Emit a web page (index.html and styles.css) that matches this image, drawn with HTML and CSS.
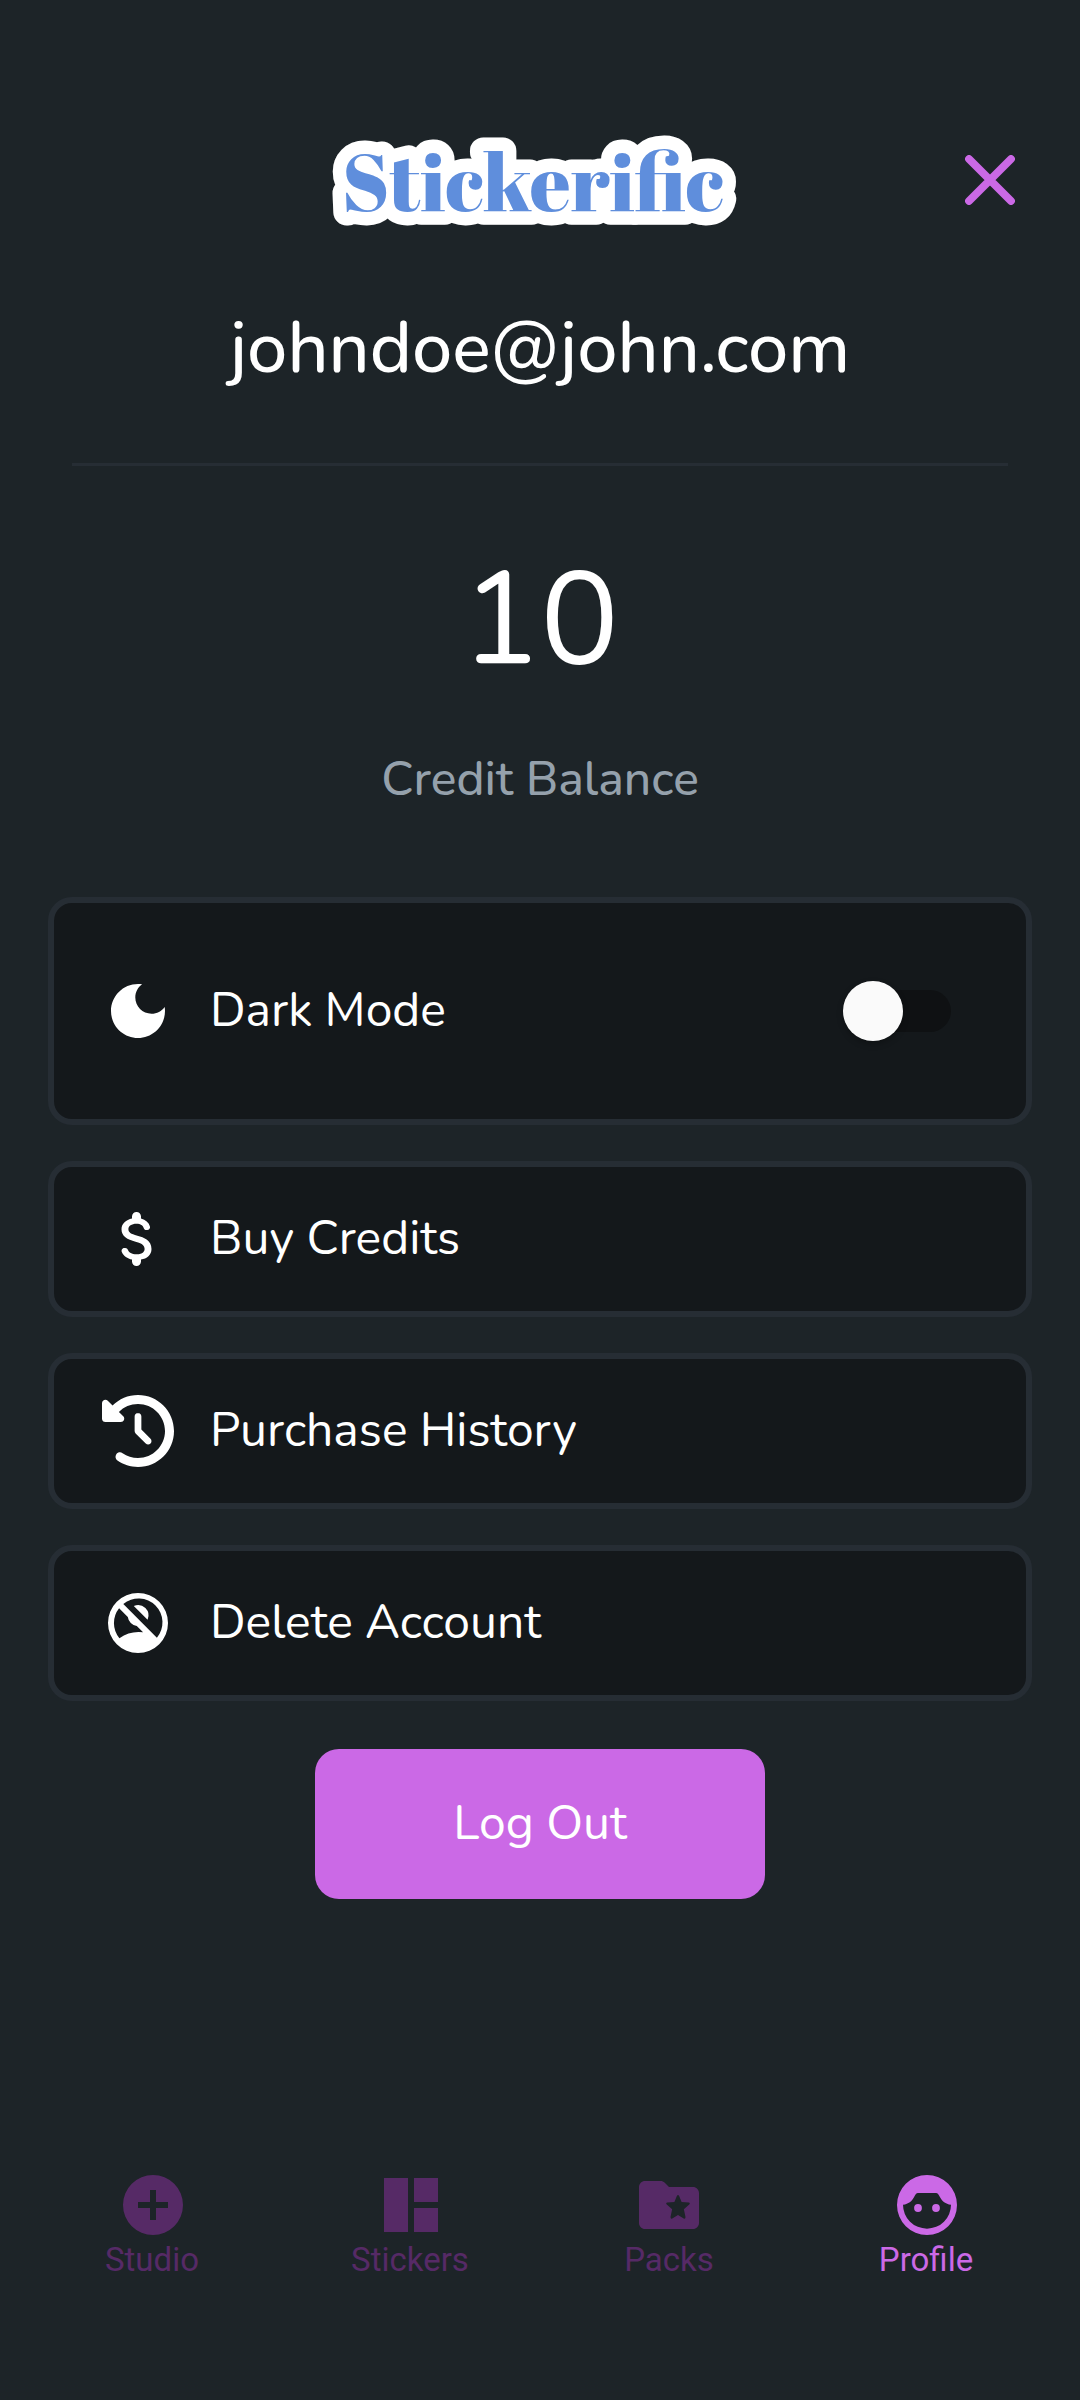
FILE: index.html
```html
<!DOCTYPE html>
<html lang="en">
<head>
<meta charset="utf-8">
<title>Stickerific – Profile</title>
<link rel="stylesheet" href="styles.css">
</head>
<body>
<div class="screen">
  <header class="header">
    <svg class="logo" viewBox="0 0 420 100" role="img" aria-label="Stickerific">
      <text class="logo-outline" x="201" y="79.5">Stickerific</text>
      <text class="logo-fill" x="201" y="79.5">Stickerific</text>
    </svg>
    <button class="close" aria-label="Close">
      <svg viewBox="0 0 50 50"><path d="M4 4 46 46M46 4 4 46"/></svg>
    </button>
  </header>
  <div class="email">johndoe@john.com</div>
  <hr class="divider">
  <div class="balance">10</div>
  <div class="balance-label">Credit Balance</div>

  <main class="menu">
    <div class="card card-tall">
      <svg class="icon" viewBox="0 0 24 24"><path d="M12 3c-4.97 0-9 4.03-9 9s4.03 9 9 9 9-4.03 9-9c0-.46-.04-.92-.1-1.36-.98 1.37-2.58 2.26-4.4 2.26-2.98 0-5.4-2.42-5.4-5.4 0-1.81.89-3.42 2.26-4.4C12.92 3.04 12.46 3 12 3z"/></svg>
      <span class="label">Dark Mode</span>
      <span class="switch"><span class="thumb"></span></span>
    </div>
    <div class="card">
      <svg class="icon" viewBox="0 0 24 24"><path d="M11.8 10.9c-2.27-.59-3-1.2-3-2.15 0-1.09 1.01-1.85 2.7-1.85 1.42 0 2.13.54 2.39 1.4.12.4.45.7.87.7h.3c.66 0 1.13-.65.9-1.27-.42-1.18-1.4-2.16-2.96-2.54V4.5c0-.83-.67-1.5-1.5-1.5S10 3.67 10 4.5v.66c-1.94.42-3.5 1.68-3.5 3.61 0 2.31 1.91 3.46 4.7 4.13 2.5.6 3 1.48 3 2.41 0 .69-.49 1.79-2.7 1.79-1.65 0-2.5-.59-2.83-1.43-.15-.39-.49-.67-.9-.67h-.28c-.67 0-1.14.68-.89 1.3.57 1.39 1.9 2.21 3.4 2.53v.67c0 .83.67 1.5 1.5 1.5s1.5-.67 1.5-1.5v-.65c1.95-.37 3.5-1.5 3.5-3.55 0-2.84-2.43-3.81-4.7-4.4z"/></svg>
      <span class="label">Buy Credits</span>
    </div>
    <div class="card">
      <svg class="icon" viewBox="0 0 512 512"><path d="M75 75L41 41C25.9 25.9 0 36.6 0 57.9V168c0 13.3 10.7 24 24 24H134.1c21.4 0 32.1-25.9 17-41l-30.8-30.8C155 85.5 203 64 256 64c106 0 192 86 192 192s-86 192-192 192c-40.8 0-78.6-12.7-109.7-34.4c-14.5-10.1-34.4-6.6-44.6 7.9s-6.6 34.4 7.9 44.6C151.2 495 201.7 512 256 512c141.4 0 256-114.6 256-256S397.4 0 256 0C185.3 0 121.3 28.7 75 75zm181 53c-13.3 0-24 10.7-24 24V256c0 6.4 2.5 12.5 7 17l72 72c9.4 9.4 24.6 9.4 33.9 0s9.4-24.6 0-33.9l-65-65V152c0-13.3-10.7-24-24-24z"/></svg>
      <span class="label">Purchase History</span>
    </div>
    <div class="card">
      <svg class="icon" viewBox="0 0 24 24"><path fill-rule="evenodd" d="M12 2a10 10 0 1 0 0 20 10 10 0 0 0 0-20zM7.1 5.7A7.95 7.95 0 0 1 18.3 16.9L7.1 5.7zM5.7 7.1 8.6 10a3.5 3.5 0 0 0 3 3L13.7 15.1A11 11 0 0 0 5.8 17.1 7.95 7.95 0 0 1 5.7 7.1z"/><path d="M10.6 6.3A3.5 3.5 0 0 1 15.2 10.9z"/></svg>
      <span class="label">Delete Account</span>
    </div>
  </main>
  <button class="logout">Log Out</button>

  <nav class="nav">
    <a class="tab">
      <svg class="icon" viewBox="0 0 24 24"><path d="M12 2a10 10 0 1 0 0 20 10 10 0 0 0 0-20zm5 11h-4v4h-2v-4H7v-2h4V7h2v4h4v2z"/></svg>
      <span>Studio</span>
    </a>
    <a class="tab">
      <svg class="icon" viewBox="0 0 24 24"><path d="M3 3h8v18H3zM13 3h8v8h-8zM13 13h8v8h-8z"/></svg>
      <span>Stickers</span>
    </a>
    <a class="tab">
      <svg class="icon" viewBox="0 0 24 24"><path fill-rule="evenodd" d="M20 6h-8l-1.41-1.41C10.21 4.21 9.7 4 9.17 4H4c-1.1 0-2 .9-2 2v12c0 1.1.9 2 2 2h16c1.1 0 2-.9 2-2V8c0-1.1-.9-2-2-2zM15.35 8.9 16.2 11 18.55 11.2Q19.2 11.35 18.75 11.85L16.95 13.4 17.5 16Q17.5 16.75 16.9 16.5L15 15.3 13.1 16.5Q12.5 16.75 12.5 16L13.05 13.4 11.25 11.85Q10.8 11.35 11.45 11.2L13.8 11 14.65 8.9Q15 8.35 15.35 8.9z"/></svg>
      <span class="flush">Packs</span>
    </a>
    <a class="tab active">
      <svg class="icon" viewBox="0 0 24 24"><path fill-rule="evenodd" d="M12 2a10 10 0 1 0 0 20 10 10 0 0 0 0-20zM4 11.9C5.9 11.6 6.9 10.8 7.7 9.3 8.2 8.4 8.4 8 9 8h6c.6 0 .8.4 1.3 1.3.8 1.5 1.8 2.3 3.7 2.6A8 8 0 1 1 4 11.9z"/><circle cx="9" cy="13" r="1.3"/><circle cx="15" cy="13" r="1.3"/></svg>
      <span>Profile</span>
    </a>
  </nav>
</div>
</body>
</html>
```
FILE: styles.css
```css
* { box-sizing: border-box; }
body {
  margin: 0;
  background: #1d2428;
  color: #fff;
  font-family: Nunito, Lato, sans-serif;
}
button { border: 0; padding: 0; background: none; font: inherit; color: inherit; }
.screen {
  width: 1080px;
  height: 2400px;
  display: flex;
  flex-direction: column;
  align-items: center;
}
.header {
  width: 100%;
  height: 100px;
  margin-top: 131px;
  padding: 0 65px 0 332px;
  display: flex;
  justify-content: space-between;
  align-items: flex-start;
}
.logo { width: 420px; height: 100px; overflow: visible; }
.logo text {
  font-family: "Abril Fatface", "Liberation Serif", serif;
  font-size: 79px;
  font-weight: 400;
  text-anchor: middle;
}
.logo-outline { fill: #fff; stroke: #fff; stroke-width: 27; stroke-linejoin: round; }
.logo-fill { fill: #5f8edc; }
.close { width: 50px; height: 50px; margin-top: 24px; }
.close svg { display: block; fill: none; stroke: #cb69e6; stroke-width: 7.8; stroke-linecap: round; }

.email { height: 96px; margin-top: 69px; line-height: 96px; font-size: 72px; font-weight: 500; }
.divider { width: 936px; height: 3px; margin: 67px 0 0; border: 0; background: #262d34; }
.balance { height: 180px; margin-top: 64px; line-height: 180px; font-size: 132px; }
.balance-label { height: 64px; margin-top: 37px; line-height: 64px; font-size: 48px; font-weight: 500; color: #95a1ac; }

.menu { width: 984px; margin-top: 86px; display: flex; flex-direction: column; gap: 36px; }
.card {
  height: 156px;
  padding: 0 48px;
  display: flex;
  align-items: center;
  background: #14181b;
  border: 6px solid #262d34;
  border-radius: 24px;
}
.card-tall { height: 228px; }
.icon { width: 72px; height: 72px; display: block; fill: currentColor; flex: none; }
.label { margin-left: 36px; padding-bottom: 2px; font-size: 48px; line-height: 64px; white-space: nowrap; }
.switch {
  width: 96px;
  height: 42px;
  margin: 0 27px 0 auto;
  display: flex;
  align-items: center;
  border-radius: 21px;
  background: #0f1113;
}
.thumb {
  width: 60px;
  height: 60px;
  margin-left: -12px;
  flex: none;
  border-radius: 50%;
  background: #fafafa;
  box-shadow: 0 3px 6px rgba(0, 0, 0, .25);
}
.logout {
  width: 450px;
  height: 150px;
  margin-top: 48px;
  padding-bottom: 2px;
  border-radius: 24px;
  background: #cb69e6;
  font-size: 48px;
}
.nav { width: 1032px; margin-top: 270px; display: flex; }
.tab {
  flex: 1;
  display: flex;
  flex-direction: column;
  align-items: center;
  font: 33px/38px Roboto, sans-serif;
  color: #562a66;
}
.tab span { padding-right: 2px; }
.tab .flush { padding-right: 0; }
.active { color: #cb69e6; }
```
